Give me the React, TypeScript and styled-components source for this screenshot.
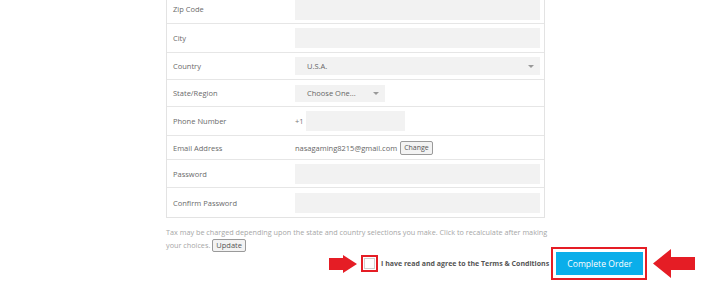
import React from 'react';
import styled, { createGlobalStyle } from 'styled-components';

const GlobalStyle = createGlobalStyle`
  html, body {
    margin: 0;
    padding: 0;
    background: #fff;
    font-family: "Open Sans", "Liberation Sans", sans-serif;
  }
`;

const Page = styled.div`
  width: 710px;
  height: 290px;
  overflow: hidden;
  position: relative;
`;

const FormColumn = styled.div`
  margin-left: 166px;
  width: 390px;
  margin-top: -6px;
`;

const Table = styled.div`
  border: 1px solid #e3e3e3;
  width: 377px;
`;

const Row = styled.div<{ $h: number }>`
  display: grid;
  grid-template-columns: 128px 1fr;
  align-items: center;
  height: ${(p) => p.$h}px;
  & + & {
    border-top: 1px solid #e6e6e6;
  }
`;

const Label = styled.div`
  padding-left: 6px;
  font-size: 7.5px;
  color: #6a6a6a;
`;

const Value = styled.div`
  display: flex;
  align-items: center;
  padding-right: 4px;
  font-size: 7.5px;
  color: #666;
`;

const TextInput = styled.div<{ $w?: number; $h?: number }>`
  width: ${(p) => (p.$w ? `${p.$w}px` : '100%')};
  height: ${(p) => p.$h ?? 20}px;
  background: #f2f2f2;
`;

const Select = styled.div<{ $w?: number; $h?: number }>`
  position: relative;
  display: flex;
  align-items: center;
  width: ${(p) => (p.$w ? `${p.$w}px` : '100%')};
  height: ${(p) => p.$h ?? 18}px;
  background: #f2f2f2;
  padding-left: 12px;
  box-sizing: border-box;
  font-size: 7.5px;
  color: #666;

  &::after {
    content: '';
    position: absolute;
    right: 6px;
    top: 50%;
    margin-top: -1px;
    border-left: 3px solid transparent;
    border-right: 3px solid transparent;
    border-top: 3px solid #999;
  }
`;

const Prefix = styled.span`
  width: 11px;
  color: #777;
`;

const SmallButton = styled.button`
  font-family: inherit;
  font-size: 7px;
  color: #555;
  background: #f3f3f3;
  border: 1px solid #9a9a9a;
  border-radius: 2px;
  height: 14px;
  padding: 0 3px;
  margin-left: 3px;
  line-height: 1;
  cursor: pointer;
`;

const TaxNote = styled.p`
  margin: 8px 0 0;
  font-size: 7.25px;
  line-height: 13px;
  color: #a6a6a6;
  white-space: nowrap;

  ${SmallButton} {
    height: 13px;
    font-size: 7.5px;
    margin-left: 2px;
  }
`;

const Footer = styled.div`
  display: flex;
  align-items: center;
  height: 35px;
  padding-left: 329px;
  margin-top: -6px;
`;

const CheckHighlight = styled.div`
  width: 17px;
  height: 17px;
  box-sizing: border-box;
  border: 2px solid #e51d25;
  margin-left: 4px;
  display: flex;
  align-items: center;
  justify-content: center;
`;

const CheckBox = styled.span`
  width: 9px;
  height: 9px;
  border: 1px solid #cfcfcf;
  background: #fff;
`;

const Terms = styled.span`
  margin-left: 3px;
  font-size: 7px;
  font-weight: 700;
  color: #555;
  white-space: nowrap;
`;

const OrderHighlight = styled.div`
  margin-left: 2px;
  border: 2px solid #e51d25;
  padding: 3px 2px 3px 3px;
  display: flex;
`;

const OrderButton = styled.button`
  width: 87px;
  height: 23px;
  border: none;
  background: #0aaeea;
  color: #fff;
  font-family: inherit;
  font-size: 8.6px;
  padding: 0;
  cursor: pointer;
`;

const Arrow = styled.svg`
  display: block;
  flex: none;
`;

const ArrowRight = () => (
  <Arrow width="28" height="18" viewBox="0 0 28 18">
    <polygon points="0,3 14,3 14,0 28,9 14,18 14,15 0,15" fill="#e51d25" />
  </Arrow>
);

const ArrowLeft = () => (
  <Arrow width="42" height="29" viewBox="0 0 42 29" style={{ marginLeft: 6 }}>
    <polygon points="0,14.5 18,0 18,8 42,8 42,21 18,21 18,29" fill="#e51d25" />
  </Arrow>
);

const App: React.FC = () => {
  return (
    <>
      <GlobalStyle />
      <Page>
        <FormColumn>
          <Table>
            <Row $h={28}>
              <Label>Zip Code</Label>
              <Value><TextInput $h={21} /></Value>
            </Row>
            <Row $h={28}>
              <Label>City</Label>
              <Value><TextInput /></Value>
            </Row>
            <Row $h={26}>
              <Label>Country</Label>
              <Value><Select>U.S.A.</Select></Value>
            </Row>
            <Row $h={26}>
              <Label>State/Region</Label>
              <Value><Select $w={90} $h={17}>Choose One...</Select></Value>
            </Row>
            <Row $h={28}>
              <Label>Phone Number</Label>
              <Value>
                <Prefix>+1</Prefix>
                <TextInput $w={99} />
              </Value>
            </Row>
            <Row $h={23}>
              <Label>Email Address</Label>
              <Value>
                nasagaming8215@gmail.com
                <SmallButton>Change</SmallButton>
              </Value>
            </Row>
            <Row $h={27}>
              <Label>Password</Label>
              <Value><TextInput /></Value>
            </Row>
            <Row $h={29}>
              <Label>Confirm Password</Label>
              <Value><TextInput /></Value>
            </Row>
          </Table>
          <TaxNote>
            Tax may be charged depending upon the state and country selections you make. Click to recalculate after making
            <br />
            your choices.
            <SmallButton>Update</SmallButton>
          </TaxNote>
        </FormColumn>
        <Footer>
          <ArrowRight />
          <CheckHighlight>
            <CheckBox />
          </CheckHighlight>
          <Terms>I have read and agree to the Terms &amp; Conditions</Terms>
          <OrderHighlight>
            <OrderButton>Complete Order</OrderButton>
          </OrderHighlight>
          <ArrowLeft />
        </Footer>
      </Page>
    </>
  );
};

export default App;
